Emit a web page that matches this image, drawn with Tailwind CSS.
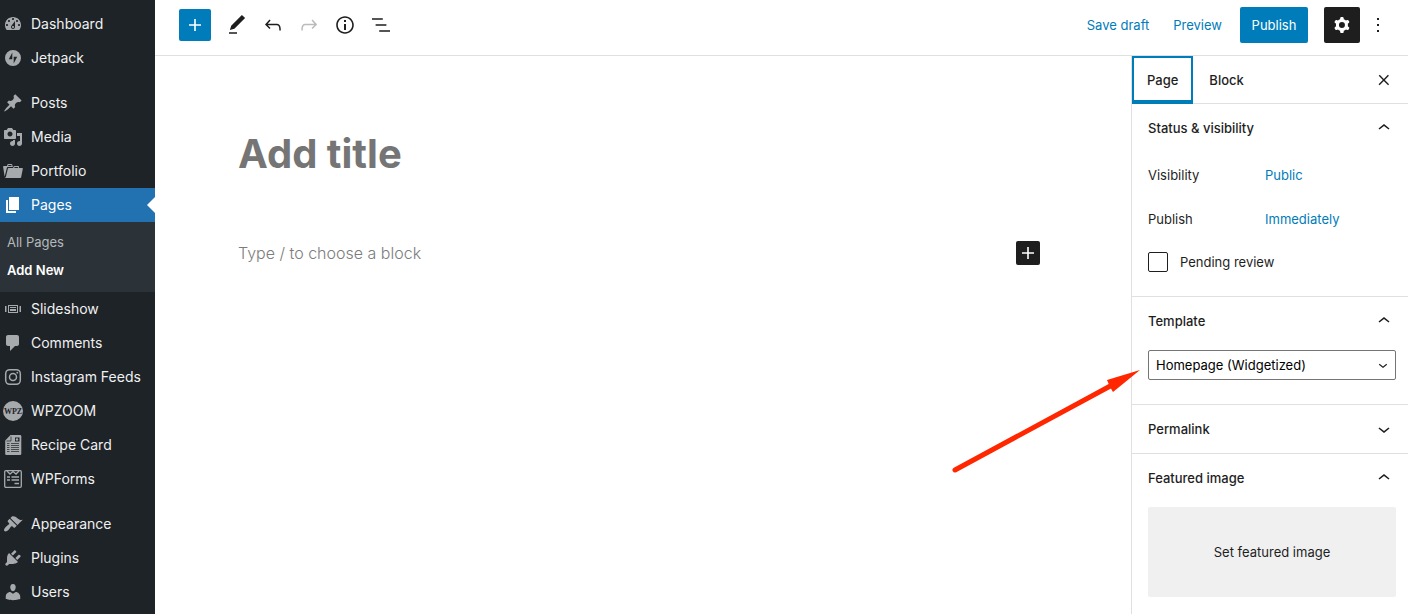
<!DOCTYPE html>
<html lang="en">

<head>
    <meta charset="UTF-8">
    <meta name="viewport" content="width=device-width, initial-scale=1.0">
    <title>Add New Page</title>
    <script src="https://cdn.jsdelivr.net/npm/@tailwindcss/browser@4"></script>
</head>

<body class="flex h-screen overflow-hidden bg-white font-['Inter',sans-serif] text-[13px] leading-[22px] text-[#1e1e1e]">

    <!-- Admin menu -->
    <nav class="w-[155px] shrink-0 overflow-hidden bg-[#1d2327] pt-[7px] text-sm text-[#f0f0f1]" aria-label="Main menu">
        <ul>
            <li>
                <a href="#" class="flex h-[34px] items-center gap-2 pl-[3px] whitespace-nowrap hover:text-[#72aee6]">
                    <svg class="size-5 fill-[#a7aaad]" viewBox="0 0 20 20"><path d="M3.76 16h12.48c1.1-1.37 1.76-3.11 1.76-5 0-4.42-3.58-8-8-8s-8 3.58-8 8c0 1.89.66 3.63 1.76 5zM10 4c.55 0 1 .45 1 1s-.45 1-1 1-1-.45-1-1 .45-1 1-1zM6 6c.55 0 1 .45 1 1s-.45 1-1 1-1-.45-1-1 .45-1 1-1zm8 0c.55 0 1 .45 1 1s-.45 1-1 1-1-.45-1-1 .45-1 1-1zm-5.37 5.55L12 7v6c0 1.1-.9 2-2 2s-2-.9-2-2c0-.57.24-1.08.63-1.45zM4 10c.55 0 1 .45 1 1s-.45 1-1 1-1-.45-1-1 .45-1 1-1zm12 0c.55 0 1 .45 1 1s-.45 1-1 1-1-.45-1-1 .45-1 1-1zm-5 3c0-.55-.45-1-1-1s-1 .45-1 1 .45 1 1 1 1-.45 1-1z"/></svg>
                    Dashboard
                </a>
            </li>
            <li>
                <a href="#" class="flex h-[34px] items-center gap-2 pl-[3px] whitespace-nowrap hover:text-[#72aee6]">
                    <svg class="size-5 fill-[#a7aaad]" viewBox="0 0 20 20"><path fill-rule="evenodd" d="M10 2a8 8 0 1 0 0 16 8 8 0 0 0 0-16zM9.300 11.200H5.800L9.300 4.500zM10.700 15.500V8.800h3.500z"/></svg>
                    Jetpack
                </a>
            </li>
        </ul>
        <ul class="mt-[11px]">
            <li>
                <a href="#" class="flex h-[34px] items-center gap-2 pl-[3px] whitespace-nowrap hover:text-[#72aee6]">
                    <svg class="size-5 fill-[#a7aaad]" viewBox="0 0 20 20"><path d="M10.44 3.02l1.82-1.82 6.36 6.35-1.83 1.82c-1.05-.68-2.48-.57-3.41.36l-.75.75c-.92.93-1.04 2.35-.35 3.41l-1.83 1.82-2.41-2.41-2.8 2.79c-.42.42-3.38 2.71-3.8 2.29s1.86-3.39 2.28-3.81l2.79-2.79L4.1 9.36l1.83-1.82c1.05.69 2.48.57 3.4-.36l.75-.75c.93-.92 1.05-2.35.36-3.41z"/></svg>
                    Posts
                </a>
            </li>
            <li>
                <a href="#" class="flex h-[34px] items-center gap-2 pl-[3px] whitespace-nowrap hover:text-[#72aee6]">
                    <svg class="size-5 fill-[#a7aaad]" viewBox="0 0 20 20"><path d="M13 11V4c0-.55-.45-1-1-1h-1.67L9 1H5L3.67 3H2c-.55 0-1 .45-1 1v7c0 .55.45 1 1 1h10c.55 0 1-.45 1-1zM7 4.5c1.38 0 2.5 1.12 2.5 2.5S8.38 9.5 7 9.5 4.5 8.38 4.5 7 5.62 4.5 7 4.5zM14 6h5v10.5c0 1.38-1.12 2.5-2.5 2.5S14 17.88 14 16.5s1.12-2.5 2.5-2.5c.17 0 .34.02.5.05V9h-3V6zm-4 8.05V13h2v3.5c0 1.38-1.12 2.5-2.5 2.5S7 17.88 7 16.5 8.12 14 9.5 14c.17 0 .34.02.5.05z"/></svg>
                    Media
                </a>
            </li>
            <li>
                <a href="#" class="flex h-[34px] items-center gap-2 pl-[3px] whitespace-nowrap hover:text-[#72aee6]">
                    <svg class="size-5 fill-[#a7aaad]" viewBox="0 0 20 20"><path d="M4 5H.78c-.37 0-.74.32-.69.84l1.56 9.99S3.5 8.47 3.86 6.7c.11-.53.61-.7.98-.7H10s-.7-2.08-.77-2.31C9.11 3.25 8.89 3 8.45 3H5.14c-.36 0-.7.23-.8.64C4.25 4.04 4 5 4 5zm4.88 0h-4s.42-1 .87-1h2.13c.48 0 1 1 1 1zM2.67 16.25c-.31.47-.76.75-1.26.75h15.73c.54 0 .92-.31 1.03-.83.44-2.19 1.68-8.44 1.68-8.44.07-.5-.3-.73-.62-.73H16V5.53c0-.16-.26-.53-.66-.53h-3.76c-.52 0-.87.58-.87.58L10 7H5.59c-.32 0-.63.19-.69.5 0 0-1.59 6.7-1.72 7.33-.07.37-.22.99-.51 1.42zM15.38 7H11s.58-1 1.13-1h2.29c.71 0 .96 1 .96 1z"/></svg>
                    Portfolio
                </a>
            </li>
            <li>
                <a href="#" class="relative flex h-[34px] items-center gap-2 bg-[#2271b1] pl-[3px] whitespace-nowrap text-white" aria-current="page">
                    <svg class="size-5 fill-white" viewBox="0 0 20 20"><path d="M6 15V2h10v13H6zm-1 1h8v2H3V5h2v11z"/></svg>
                    Pages
                    <span class="absolute top-1/2 right-0 -translate-y-1/2 border-8 border-l-0 border-transparent border-r-white"></span>
                </a>
                <ul class="bg-[#2c3338] pt-1.5 pb-2 text-[13px] text-[#b5b9bc]">
                    <li><a href="#" class="flex h-7 items-center pl-[7px] hover:text-[#72aee6]">All Pages</a></li>
                    <li><a href="#" class="flex h-7 items-center pl-[7px] font-semibold text-white">Add New</a></li>
                </ul>
            </li>
            <li>
                <a href="#" class="flex h-[34px] items-center gap-2 pl-[3px] whitespace-nowrap hover:text-[#72aee6]">
                    <svg class="size-5 fill-[#a7aaad]" viewBox="0 0 20 20"><path d="M5 14V6h10v8H5zm-3-1V7h1.500v6H2zm4-6v6h8V7H6zm10.500 0H18v6h-1.500V7zM13 9V8H7v1h6zm0 3v-2H7v2h6z"/></svg>
                    Slideshow
                </a>
            </li>
            <li>
                <a href="#" class="flex h-[34px] items-center gap-2 pl-[3px] whitespace-nowrap hover:text-[#72aee6]">
                    <svg class="size-5 fill-[#a7aaad]" viewBox="0 0 20 20"><path d="M5 2h9c1.1 0 2 .9 2 2v7c0 1.1-.9 2-2 2h-2l-5 5v-5H5c-1.1 0-2-.9-2-2V4c0-1.1.9-2 2-2z"/></svg>
                    Comments
                </a>
            </li>
            <li>
                <a href="#" class="flex h-[34px] items-center gap-2 pl-[3px] whitespace-nowrap hover:text-[#72aee6]">
                    <svg class="size-5 fill-none stroke-[#a7aaad]" viewBox="0 0 20 20" stroke-width="1.5"><rect x="2.700" y="2.700" width="14.600" height="14.600" rx="4"/><circle cx="10" cy="10" r="3.500"/><circle cx="14.300" cy="5.700" r=".9" fill="#a7aaad" stroke="none"/></svg>
                    Instagram Feeds
                </a>
            </li>
            <li>
                <a href="#" class="flex h-[34px] items-center gap-2 pl-[3px] whitespace-nowrap hover:text-[#72aee6]">
                    <svg class="size-5" viewBox="0 0 20 20"><circle cx="10" cy="10" r="10" fill="#a7aaad"/><text x="10" y="12.500" text-anchor="middle" font-family="Liberation Serif, serif" font-weight="700" font-size="8" fill="#1d2327">WPZ</text></svg>
                    WPZOOM
                </a>
            </li>
            <li>
                <a href="#" class="flex h-[34px] items-center gap-2 pl-[3px] whitespace-nowrap hover:text-[#72aee6]">
                    <svg class="size-5" viewBox="0 0 20 20"><path fill="#a7aaad" d="M7.500 0H17a1.300 1.300 0 0 1 1.300 1.300v17.400A1.300 1.300 0 0 1 17 20H3.500a1.300 1.300 0 0 1-1.300-1.300V5.500z"/><path stroke="#1d2327" stroke-width=".7" fill="none" d="M8 1.500v4.500H3.500M4 8.500h2.500M4 10.500h2.500M4 12.500h2.500M4 14.500h2.500M4 16.500h2.500M8 8.500h8M8 10.500h8M8 12.500h8M8 14.500h8M8 16.500h8"/><path fill="#1d2327" d="M12 2.500h4.500v4H12z"/><circle cx="14" cy="4.500" r="1.200" fill="#a7aaad"/></svg>
                    Recipe Card
                </a>
            </li>
            <li>
                <a href="#" class="flex h-[34px] items-center gap-2 pl-[3px] whitespace-nowrap hover:text-[#72aee6]">
                    <svg class="size-5 fill-none stroke-[#a7aaad]" viewBox="0 0 20 20" stroke-width="1.300"><rect x="1.700" y="1.700" width="16.600" height="16.600" rx="1.200"/><path d="M4 2l3 3 3-2.500L13 5l3-3M4 8h3M8.500 8H16M4 11h3M8.500 11H16M11.500 14.500H16"/></svg>
                    WPForms
                </a>
            </li>
        </ul>
        <ul class="mt-[11px]">
            <li>
                <a href="#" class="flex h-[34px] items-center gap-2 pl-[3px] whitespace-nowrap hover:text-[#72aee6]">
                    <svg class="size-5 fill-[#a7aaad]" viewBox="0 0 20 20"><path d="M14.480 11.060L7.410 3.990l1.500-1.500c.5-.56 2.300-.47 3.510.32 1.210.8 1.430 1.280 2.910 2.100 1.180.64 2.450 1.260 4.450.85zm-.71.71L6.700 4.700 4.930 6.470c-.39.39-.39 1.020 0 1.410l1.060 1.060c.39.39.39 1.030 0 1.420-.6.6-1.430 1.110-2.210 1.690-.35.26-.7.53-1.010.84C1.430 14.230.4 16.080 1.400 17.070c.99 1 2.840-.03 4.180-1.360.31-.31.58-.66.85-1.020.57-.78 1.080-1.610 1.690-2.210.39-.39 1.020-.39 1.410 0l1.060 1.060c.39.39 1.020.39 1.410 0z"/></svg>
                    Appearance
                </a>
            </li>
            <li>
                <a href="#" class="flex h-[34px] items-center gap-2 pl-[3px] whitespace-nowrap hover:text-[#72aee6]">
                    <svg class="size-5 fill-[#a7aaad]" viewBox="0 0 20 20"><path d="M13.110 4.360L9.870 7.600 8 5.730l3.240-3.240c.35-.34 1.050-.2 1.560.32.52.51.66 1.210.31 1.550zm-8 1.770l.91-1.120 9.010 9.010-1.190.84c-.71.71-2.630 1.160-3.820 1.160H6.140L4.900 17.260c-.59.59-1.540.59-2.120 0-.59-.58-.59-1.530 0-2.120l1.240-1.240v-3.880c0-1.130.4-3.190 1.090-3.890zm7.260 3.970l3.240-3.240c.34-.35 1.040-.21 1.550.31.52.51.66 1.210.31 1.550l-3.240 3.250z"/></svg>
                    Plugins
                </a>
            </li>
            <li>
                <a href="#" class="flex h-[34px] items-center gap-2 pl-[3px] whitespace-nowrap hover:text-[#72aee6]">
                    <svg class="size-5 fill-[#a7aaad]" viewBox="0 0 20 20"><path d="M10 9.250c-2.270 0-2.730-3.440-2.730-3.440C7 4.020 7.820 2 9.970 2c2.160 0 2.980 2.020 2.710 3.810 0 0-.41 3.440-2.680 3.440zm0 2.570L12.720 10c2.390 0 4.520 2.330 4.520 4.530v2.490s-3.650 1.130-7.240 1.130c-3.650 0-7.240-1.130-7.240-1.130v-2.490c0-2.250 1.940-4.480 4.470-4.480z"/></svg>
                    Users
                </a>
            </li>
        </ul>
    </nav>

    <div class="flex min-w-0 flex-1 flex-col">

        <!-- Top toolbar -->
        <header class="flex h-14 shrink-0 items-center justify-between border-b border-[#e0e0e0] pr-3 pb-[5px] pl-6">
            <div class="flex items-center">
                <button class="mr-2 flex size-8 items-center justify-center rounded-xs bg-[#007cba]" aria-label="Add block">
                    <svg class="size-6 fill-white" viewBox="0 0 24 24"><path d="M18 11.200h-5.200V6h-1.600v5.200H6v1.600h5.200V18h1.600v-5.200H18z"/></svg>
                </button>
                <button class="flex size-9 items-center justify-center" aria-label="Tools">
                    <svg class="size-6 fill-[#1e1e1e]" viewBox="0 0 24 24"><path d="M20.100 5.100L16.900 2 6.200 12.700l-1.300 4.400 4.500-1.300L20.100 5.100zM4 20.800h8v-1.500H4v1.500z"/></svg>
                </button>
                <button class="flex size-9 items-center justify-center" aria-label="Undo">
                    <svg class="size-6 fill-[#1e1e1e]" viewBox="0 0 24 24"><path d="M18.300 11.700c-.6-.6-1.400-.9-2.300-.9H6.700l2.900-3.300-1.100-1-4.500 5L8.500 16l1-1-2.700-2.700H16c.5 0 .9.200 1.300.5 1 1 1 3.400 1 4.500v.3h1.500v-.2c0-1.500 0-4.300-1.500-5.700z"/></svg>
                </button>
                <button class="flex size-9 items-center justify-center" aria-label="Redo" disabled>
                    <svg class="size-6 fill-[#bbbbbb]" viewBox="0 0 24 24"><path d="M15.600 6.500l-1.100 1 2.900 3.300H8c-.9 0-1.700.3-2.300.9-1.400 1.500-1.400 4.200-1.400 5.600v.2h1.500v-.3c0-1.100 0-3.500 1-4.500.3-.3.7-.5 1.300-.5h9.200L14.500 15l1.100 1.100 4.600-4.600-4.600-5z"/></svg>
                </button>
                <button class="flex size-9 items-center justify-center" aria-label="Details">
                    <svg class="size-6 fill-[#1e1e1e]" viewBox="0 0 24 24"><path d="M12 3.200c-4.800 0-8.800 3.900-8.800 8.800 0 4.800 3.900 8.800 8.800 8.800 4.800 0 8.800-3.900 8.800-8.800 0-4.800-4-8.800-8.800-8.800zm0 16c-4 0-7.200-3.300-7.200-7.200C4.800 8 8 4.800 12 4.800s7.200 3.300 7.200 7.200c0 4-3.200 7.200-7.200 7.200zM11 17h2v-6h-2v6zm0-8h2V7h-2v2z"/></svg>
                </button>
                <button class="flex size-9 items-center justify-center" aria-label="List view">
                    <svg class="size-6 fill-[#1e1e1e]" viewBox="0 0 24 24"><path d="M13.800 5.200H3v1.500h10.800V5.200zm-3.600 12v1.500H21v-1.500H10.200zm7.200-6H6.600v1.500h10.800v-1.500z"/></svg>
                </button>
            </div>
            <div class="flex items-center">
                <button class="h-9 px-3 text-[#007cba]">Save draft</button>
                <button class="h-9 px-3 text-[#007cba]">Preview</button>
                <button class="mr-4 ml-1.5 h-9 w-17 rounded-xs bg-[#007cba] text-white">Publish</button>
                <button class="flex size-9 items-center justify-center rounded-xs bg-[#1e1e1e]" aria-label="Settings" aria-pressed="true">
                    <svg class="size-6 fill-white" viewBox="0 0 24 24"><path fill-rule="evenodd" clip-rule="evenodd" d="M10.289 4.836A1 1 0 0111.275 4h1.306a1 1 0 01.987.836l.244 1.466c.787.260 1.503.679 2.108 1.218l1.393-.522a1 1 0 011.216.437l.653 1.130a1 1 0 01-.230 1.273l-1.148.944a6.025 6.025 0 010 2.435l1.149.946a1 1 0 01.230 1.272l-.653 1.130a1 1 0 01-1.216.437l-1.394-.522c-.605.540-1.320.958-2.108 1.218l-.244 1.466a1 1 0 01-.987.836h-1.306a1 1 0 01-.986-.836l-.244-1.466a5.995 5.995 0 01-2.108-1.218l-1.394.522a1 1 0 01-1.217-.436l-.653-1.131a1 1 0 01.230-1.272l1.149-.946a6.026 6.026 0 010-2.435l-1.148-.944a1 1 0 01-.230-1.272l.653-1.131a1 1 0 011.217-.437l1.393.522a5.994 5.994 0 012.108-1.218l.244-1.466zM14.929 12a3 3 0 11-6 0 3 3 0 016 0z"/></svg>
                </button>
                <button class="flex size-9 items-center justify-center" aria-label="Options">
                    <svg class="size-6 fill-[#1e1e1e]" viewBox="0 0 24 24"><path d="M13 19h-2v-2h2v2zm0-6h-2v-2h2v2zm0-6h-2V5h2v2z"/></svg>
                </button>
            </div>
        </header>

        <div class="flex min-h-0 flex-1">

            <!-- Editor canvas -->
            <main class="min-w-0 flex-1 px-12 pt-[67px]">
                <div class="mx-auto max-w-[810px]">
                    <input type="text" aria-label="Add title" placeholder="Add title" class="block h-[60px] w-full text-[40px] font-bold outline-none placeholder:text-[#757575]">
                    <div class="mt-[58px] flex h-6 items-center pr-2">
                        <input type="text" aria-label="Empty block" placeholder="Type / to choose a block" class="h-[26px] min-w-0 flex-1 text-base font-light outline-none placeholder:text-[#7c7c7c]">
                        <button class="flex size-6 items-center justify-center rounded-xs bg-[#1e1e1e]" aria-label="Add block">
                            <svg class="size-6 fill-white" viewBox="0 0 24 24"><path d="M18 11.200h-5.200V6h-1.600v5.200H6v1.600h5.200V18h1.600v-5.200H18z"/></svg>
                        </button>
                    </div>
                </div>
            </main>

            <!-- Settings sidebar -->
            <aside class="w-[277px] shrink-0 border-l border-[#e0e0e0]">
                <div class="flex h-12 items-start justify-between border-b border-[#e0e0e0] pr-3">
                    <div class="flex">
                        <button class="h-12 border-2 border-b-4 border-[#007cba] px-[13px] pt-0.5 font-medium">Page</button>
                        <button class="h-12 px-4 font-medium">Block</button>
                    </div>
                    <button class="flex h-12 w-6 items-center justify-center" aria-label="Close settings">
                        <svg class="size-5 fill-[#1e1e1e]" viewBox="0 0 24 24"><path d="M13 11.900l4.900-5-1.200-1.200-4.900 5-4.900-5-1.200 1.200 4.900 5-5.100 5.200 1.200 1.200 5.100-5.200 5.100 5.200 1.200-1.200z"/></svg>
                    </button>
                </div>

                <section class="border-b border-[#e0e0e0] pb-6">
                    <h2>
                        <button class="flex h-12 w-full items-center justify-between pr-3 pl-4 font-medium">
                            Status &amp; visibility
                            <svg class="size-6 fill-[#1e1e1e]" viewBox="0 0 24 24"><path d="M6.500 12.400L12 8l5.500 4.400-.9 1.200L12 10l-4.500 3.600-1-1.200z"/></svg>
                        </button>
                    </h2>
                    <div class="flex h-[46px] items-center px-4">
                        <span class="w-[117px]">Visibility</span>
                        <button class="text-[#007cba]">Public</button>
                    </div>
                    <div class="flex h-[42px] items-center px-4">
                        <span class="w-[117px]">Publish</span>
                        <button class="text-[#007cba]">Immediately</button>
                    </div>
                    <div class="mt-3 flex h-5 items-center gap-3 px-4">
                        <input type="checkbox" id="pending" class="size-5 appearance-none rounded-xs border border-[#1e1e1e] checked:bg-[#007cba]">
                        <label for="pending">Pending review</label>
                    </div>
                </section>

                <section class="relative border-b border-[#e0e0e0] pb-6">
                    <h2>
                        <button class="flex h-12 w-full items-center justify-between pr-3 pl-4 font-medium">
                            Template
                            <svg class="size-6 fill-[#1e1e1e]" viewBox="0 0 24 24"><path d="M6.500 12.400L12 8l5.500 4.400-.9 1.200L12 10l-4.500 3.600-1-1.200z"/></svg>
                        </button>
                    </h2>
                    <div class="relative mt-[5px] mr-3 ml-4">
                        <select aria-label="Template" class="block h-[30px] w-full appearance-none rounded-xs border border-[#757575] px-[7px] text-black">
                            <option>Homepage (Widgetized)</option>
                        </select>
                        <svg class="pointer-events-none absolute top-1.5 right-1 size-[18px] fill-[#1e1e1e]" viewBox="0 0 24 24"><path d="M17.500 11.600L12 16l-5.500-4.400.9-1.200L12 14l4.500-3.600 1 1.200z"/></svg>
                    </div>
                    <!-- Arrow pointing at the template drop-down -->
                    <svg class="pointer-events-none absolute top-[68px] left-[-182px] h-[110px] w-[192px]" viewBox="0 0 192 110" aria-hidden="true">
                        <path d="M5 105L164 19" stroke="#ff2600" stroke-width="5" stroke-linecap="round"/>
                        <path d="M190 5L163 27 160 22 157 15z" fill="#ff2600"/>
                    </svg>
                </section>

                <section class="border-b border-[#e0e0e0]">
                    <h2>
                        <button class="flex h-12 w-full items-center justify-between pr-3 pl-4 font-medium">
                            Permalink
                            <svg class="size-6 fill-[#1e1e1e]" viewBox="0 0 24 24"><path d="M17.500 11.600L12 16l-5.500-4.400.9-1.200L12 14l4.500-3.600 1 1.200z"/></svg>
                        </button>
                    </h2>
                </section>

                <section>
                    <h2>
                        <button class="flex h-12 w-full items-center justify-between pr-3 pl-4 font-medium">
                            Featured image
                            <svg class="size-6 fill-[#1e1e1e]" viewBox="0 0 24 24"><path d="M6.500 12.400L12 8l5.500 4.400-.9 1.200L12 10l-4.500 3.600-1-1.200z"/></svg>
                        </button>
                    </h2>
                    <div class="mt-[5px] mr-3 ml-4">
                        <button class="h-[90px] w-full rounded-xs bg-[#f0f0f0]">Set featured image</button>
                    </div>
                </section>
            </aside>
        </div>
    </div>
</body>

</html>
